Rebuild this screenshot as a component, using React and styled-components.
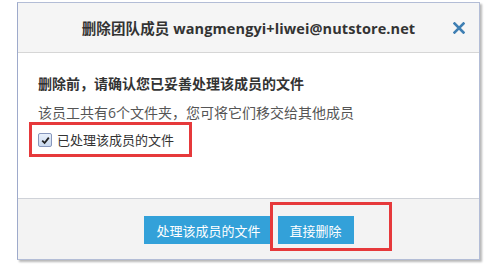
import styled, { createGlobalStyle } from 'styled-components';

const GlobalStyle = createGlobalStyle`
    html, body {
        margin: 0;
        padding: 0;
        background: #fff;
    }
    body {
        font-family: "Open Sans", "Noto Sans CJK SC", sans-serif;
        color: #333;
    }
`;

function CloseIcon() {
    return (
        <svg width="12" height="12" viewBox="0 0 12 12">
            <path d="M1.5 1.5 L10.5 10.5 M10.5 1.5 L1.5 10.5" stroke="#3f7fb3" strokeWidth="2.6" strokeLinecap="square" />
        </svg>
    );
}

function CheckMark() {
    return (
        <svg width="9" height="9" viewBox="0 0 9 9">
            <path d="M1.2 4.6 L3.6 7 L7.8 1.6" stroke="#222" strokeWidth="1.8" fill="none" />
        </svg>
    );
}

function App() {
    return (
        <Page>
            <GlobalStyle />
            <Dialog>
                <Header>
                    <Title>删除团队成员 wangmengyi+liwei@nutstore.net</Title>
                    <CloseButton><CloseIcon /></CloseButton>
                </Header>
                <Body>
                    <Warning>删除前，请确认您已妥善处理该成员的文件</Warning>
                    <Desc>该员工共有6个文件夹，您可将它们移交给其他成员</Desc>
                    <CheckRow>
                        <CheckBox><CheckMark /></CheckBox>
                        <CheckLabel>已处理该成员的文件</CheckLabel>
                        <Highlight $top={-8} $left={-9} $width={163} $height={35} />
                    </CheckRow>
                </Body>
                <Footer>
                    <Button>处理该成员的文件</Button>
                    <ButtonWrap>
                        <Button>直接删除</Button>
                        <Highlight $top={-14} $left={-8} $width={122} $height={49} />
                    </ButtonWrap>
                </Footer>
            </Dialog>
        </Page>
    );
}

export default App;

const Page = styled.div`
    padding: 2px 0 0 17px;
    height: 270px;
`;

const Dialog = styled.div`
    width: 461px;
    height: 256px;
    border: 1px solid #b3bdd6;
    border-left-color: #9eaacb;
    box-shadow: 2px 2px 2px rgba(0, 0, 0, 0.28);
    background: #fff;
    display: flex;
    flex-direction: column;
`;

const Header = styled.div`
    position: relative;
    height: 49px;
    background: #f5f5f5;
    border-bottom: 1px solid #d6d6d6;
    display: flex;
    align-items: center;
    justify-content: center;
`;

const Title = styled.h3`
    margin: 0;
    font-size: 14.5px;
    font-weight: bold;
    color: #333;
    letter-spacing: 0.1px;
`;

const CloseButton = styled.span`
    position: absolute;
    right: 14px;
    top: 19px;
    display: flex;
`;

const Body = styled.div`
    height: 145px;
    padding: 21px 20px 0;
    box-sizing: border-box;
    font-size: 14px;
    line-height: 20px;
`;

const Warning = styled.p`
    margin: 0;
    font-weight: bold;
    color: #333;
`;

const Desc = styled.p`
    margin: 9px 0 0;
    color: #555;
`;

const CheckRow = styled.label`
    position: relative;
    margin-top: 7px;
    display: flex;
    align-items: center;
    gap: 5px;
    height: 20px;
`;

const CheckBox = styled.span`
    width: 12px;
    height: 12px;
    border: 1px solid #8797bd;
    border-radius: 2px;
    background: linear-gradient(#e8f0fb, #c9d8ee);
    display: flex;
    align-items: center;
    justify-content: center;
`;

const CheckLabel = styled.span`
    font-size: 13px;
    color: #333;
`;

const Highlight = styled.span`
    position: absolute;
    top: ${p => p.$top}px;
    left: ${p => p.$left}px;
    width: ${p => p.$width}px;
    height: ${p => p.$height}px;
    box-sizing: border-box;
    border: 3px solid #e6393b;
    pointer-events: none;
`;

const Footer = styled.div`
    flex: 1;
    background: #f3f3f3;
    border-top: 1px solid #cfd2d8;
    display: flex;
    justify-content: center;
    align-items: flex-start;
    gap: 5px;
    padding-top: 17px;
    padding-left: 1px;
`;

const ButtonWrap = styled.div`
    position: relative;
    display: flex;
`;

const Button = styled.button`
    height: 28px;
    padding: 0 12px;
    border: none;
    background: #33a1d9;
    color: #fff;
    font-family: "Open Sans", "Noto Sans CJK SC", sans-serif;
    font-size: 13px;
    cursor: pointer;
`;
